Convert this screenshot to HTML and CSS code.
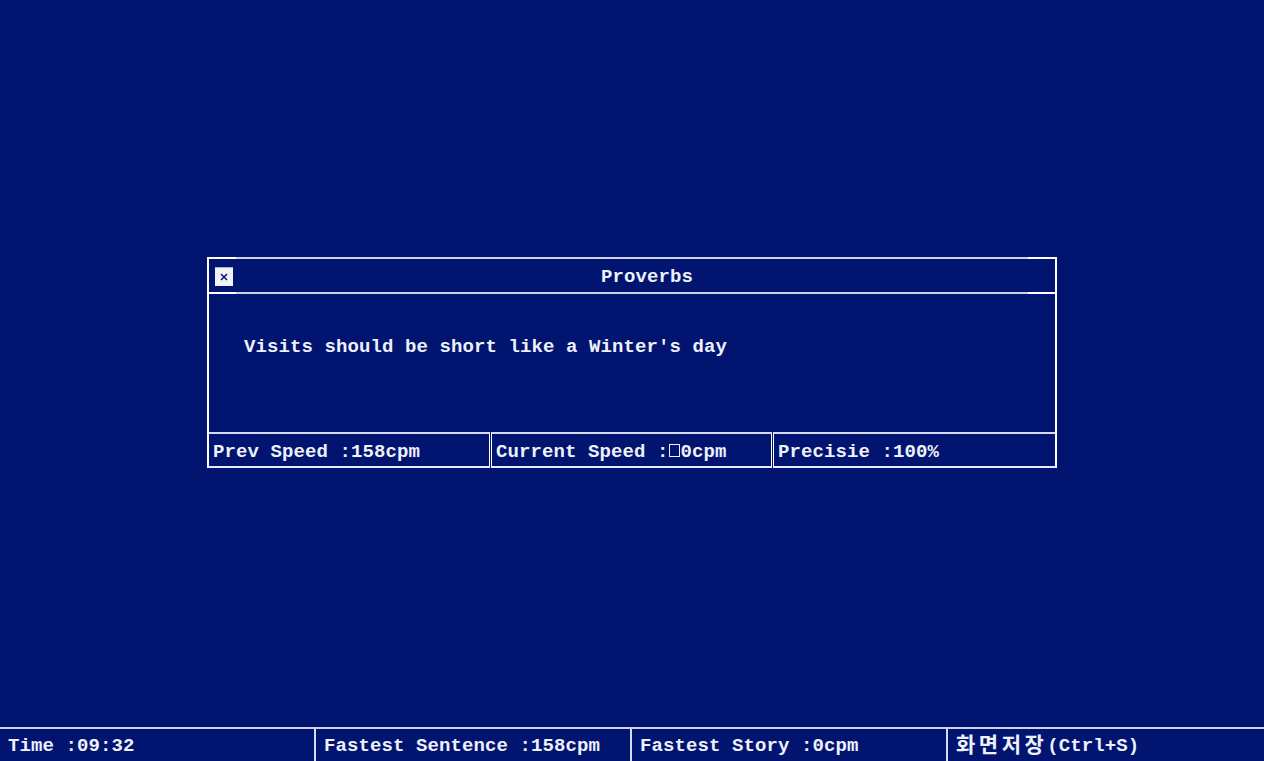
FILE: index.html
```html
<!DOCTYPE html>
<html lang="en">
<head>
<meta charset="utf-8">
<title>Proverbs</title>
<link rel="stylesheet" href="styles.css">
</head>
<body>
<main class="desk">
  <section class="dialog">
    <div class="hline"></div>
    <header class="titlebar">
      <span class="close">
        <svg width="8" height="8" viewBox="0 0 8 8"><path d="M1 1L7 7M7 1L1 7" stroke="#0a1a78" stroke-width="1.6" fill="none"/></svg>
      </span>
      <h1 class="title">Proverbs</h1>
    </header>
    <div class="hline"></div>
    <div class="content">
      <p class="sentence">Visits should be short like a Winter's day</p>
    </div>
    <div class="stats">
      <div class="stat">Prev Speed :158cpm</div>
      <div class="stat">Current Speed :<span class="tofu"></span>0cpm</div>
      <div class="stat">Precisie :100%</div>
    </div>
  </section>
</main>
<footer class="statusbar">
  <div class="cell">Time :09:32</div>
  <div class="cell">Fastest Sentence :158cpm</div>
  <div class="cell">Fastest Story :0cpm</div>
  <div class="cell"><span class="ko">화면저장</span>(Ctrl+S)</div>
</footer>
</body>
</html>
```

FILE: styles.css
```css
* { box-sizing: border-box; }

html, body {
  margin: 0;
  padding: 0;
  height: 100%;
}

body {
  background: #001470;
  color: #eef0fa;
  font-family: "Liberation Mono", "DejaVu Sans Mono", monospace;
  font-weight: 700;
  font-size: 19px;
  letter-spacing: 0.1px;
  line-height: 24px;
  display: flex;
  flex-direction: column;
  width: 1264px;
  height: 761px;
  overflow: hidden;
}

.desk {
  flex: 1;
  display: flex;
  align-items: center;
  justify-content: center;
  padding-bottom: 2px;
}

.dialog {
  width: 850px;
  border-left: 2px solid #ffffff;
  border-right: 2px solid #ffffff;
  display: flex;
  flex-direction: column;
}

.hline {
  height: 2px;
  background: linear-gradient(to right, #ffffff 0, #ffffff 27px, #ccd1ea 27px, #ccd1ea calc(100% - 27px), #ffffff calc(100% - 27px));
}

.titlebar {
  height: 33px;
  display: flex;
  align-items: center;
  padding-left: 6px;
}

.close {
  width: 18px;
  height: 19px;
  background: #f2f2f6;
  border-top: 1px solid #a9b0d2;
  display: flex;
  align-items: center;
  justify-content: center;
  margin-top: 1px;
}

.title {
  flex: 1;
  margin: 0;
  font-size: 19px;
  font-weight: 700;
  text-align: center;
  padding: 2px 0 0 6px;
}

.content {
  height: 138px;
  padding: 41px 0 0 35px;
}

.sentence {
  margin: 0;
}

.stats {
  display: grid;
  grid-template-columns: repeat(3, 1fr);
}

.stat {
  height: 36px;
  border-top: 2px solid #d6daef;
  border-bottom: 2px solid #e6e8f5;
  padding: 6px 0 0 4px;
  white-space: nowrap;
}

.stat + .stat {
  border-left: 1px solid #ffffff;
}

.stat:not(:last-child) {
  border-right: 1px solid #ffffff;
  margin-right: 1px;
}

.tofu {
  display: inline-block;
  width: 11px;
  height: 13px;
  border: 1px solid #eef0fa;
  margin-right: 1px;
  vertical-align: baseline;
}

.statusbar {
  height: 34px;
  border-top: 2px solid #ccd1ea;
  display: grid;
  grid-template-columns: repeat(4, 316px);
}

.cell {
  padding: 5px 0 0 8px;
  white-space: nowrap;
}

.cell:not(:last-child) {
  border-right: 2px solid #d6daef;
}

.ko {
  font-family: "Noto Sans CJK KR", sans-serif;
  font-weight: 700;
  font-size: 21px;
  letter-spacing: 3.5px;
  line-height: 1px;
  vertical-align: -1px;
}
```
